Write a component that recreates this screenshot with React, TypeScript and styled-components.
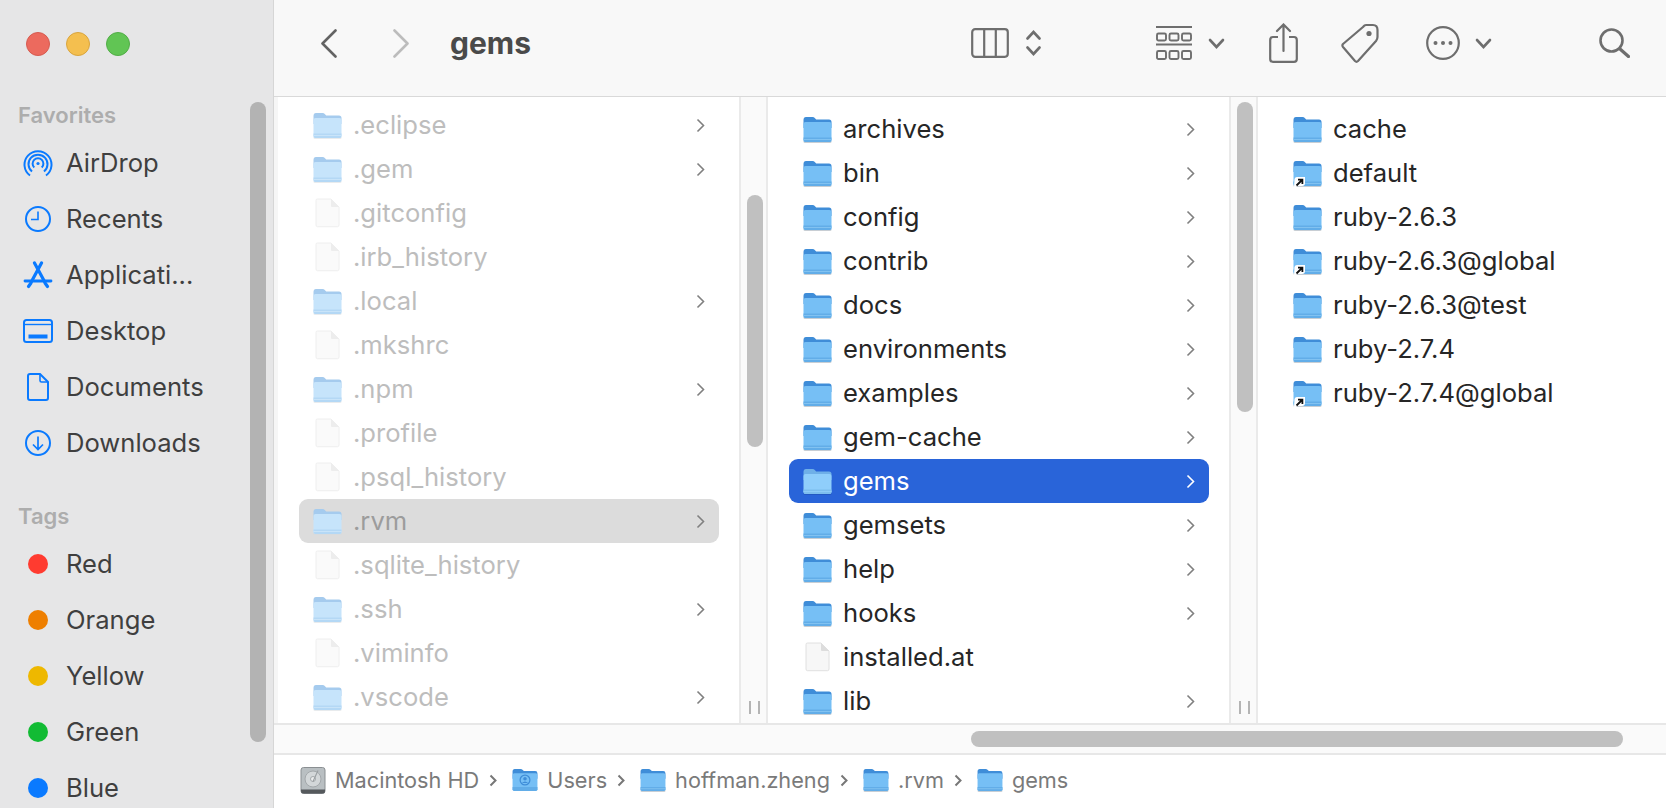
import styled, { createGlobalStyle } from "styled-components";

const GlobalStyle = createGlobalStyle`
  html, body {
    margin: 0;
    height: 100%;
    overflow: hidden;
    background: #fff;
    font-family: Inter, "Liberation Sans", sans-serif;
  }
`;

const Window = styled.div`
  display: flex;
  width: 1666px;
  height: 808px;
  overflow: hidden;
`;

/* sidebar */

const Sidebar = styled.aside`
  position: relative;
  flex: 0 0 273px;
  background: #e6e6e7;
  border-right: 1px solid #d6d6d6;
`;

const TrafficLights = styled.div`
  display: flex;
  align-items: center;
  gap: 16px;
  height: 88px;
  padding-left: 26px;
`;

const Light = styled.span<{ $color: string; $edge: string }>`
  width: 24px;
  height: 24px;
  box-sizing: border-box;
  border-radius: 50%;
  background: ${(p) => p.$color};
  border: 1px solid ${(p) => p.$edge};
`;

const SideHeading = styled.div<{ $top: number }>`
  height: 30px;
  line-height: 29px;
  margin: ${(p) => p.$top}px 0 4px 18px;
  font-size: 22px;
  font-weight: 600;
  color: #adadad;
`;

const NavRow = styled.div`
  display: flex;
  align-items: center;
  height: 56px;
  padding-left: 14px;
  font-size: 25.6px;
  color: #3f3f3f;
`;

const NavIcon = styled.span`
  display: flex;
  align-items: center;
  justify-content: center;
  flex: 0 0 48px;
  margin-right: 4px;
`;

const NavLabel = styled.span`
  padding-bottom: 2px;
`;

const TagDot = styled.span<{ $color: string }>`
  width: 20px;
  height: 20px;
  border-radius: 50%;
  background: ${(p) => p.$color};
`;

const SideThumb = styled.div`
  position: absolute;
  left: 250px;
  top: 102px;
  width: 16px;
  height: 640px;
  border-radius: 8px;
  background: #b3b3b3;
`;

/* main area */

const Main = styled.main`
  display: flex;
  flex: 1;
  flex-direction: column;
  min-width: 0;
`;

const Toolbar = styled.header`
  display: flex;
  align-items: center;
  box-sizing: border-box;
  flex: 0 0 97px;
  padding: 0 36px 10px 47px;
  background: #f8f8f8;
  border-bottom: 1px solid #d9d9d9;
`;

const Title = styled.h1`
  margin: 0 0 0 41px;
  font-size: 30px;
  font-weight: 700;
  color: #4a4a4a;
`;

const ToolSlot = styled.span<{ $left: number }>`
  display: flex;
  align-items: center;
  margin-left: ${(p) => p.$left}px;
`;

const Spacer = styled.span`
  flex: 1;
`;

const Browser = styled.div`
  display: flex;
  flex: 0 0 626px;
  box-sizing: border-box;
  border-bottom: 2px solid #e7e7e7;
`;

const Column = styled.section<{ $width?: number; $inset?: number }>`
  display: flex;
  box-sizing: border-box;
  flex: ${(p) => (p.$width ? `0 0 ${p.$width}px` : "1")};
  min-width: 0;
  padding-left: ${(p) => p.$inset ?? 0}px;
  background: #f6f6f6;
`;

const FileList = styled.ul<{ $top: number }>`
  flex: 1;
  min-width: 0;
  margin: 0;
  padding: ${(p) => p.$top}px 0 0;
  list-style: none;
  overflow: hidden;
  background: #fff;
`;

const rowText: Record<RowState, string> = {
  normal: "#262626",
  faded: "#bdbdbd",
  selected: "#ffffff",
  inactive: "#9c9c9c",
};

const FileRow = styled.li<{ $state: RowState }>`
  display: flex;
  align-items: center;
  height: 44px;
  margin: 0 20px 0 21px;
  padding: 0 14px;
  border-radius: 9px;
  font-size: 25.6px;
  color: ${(p) => rowText[p.$state]};
  background: ${(p) =>
    p.$state === "selected" ? "#2964d9" : p.$state === "inactive" ? "#dcdcdc" : "transparent"};
`;

const IconBox = styled.span`
  position: relative;
  display: flex;
  flex: 0 0 29px;
  margin-right: 11px;
`;

const FadedFile = styled.span`
  display: flex;
  opacity: 0.5;
`;

const AliasBadge = styled.svg`
  position: absolute;
  left: 0;
  bottom: -1px;
`;

const RowName = styled.span`
  flex: 1;
  padding-bottom: 2px;
  white-space: nowrap;
`;

const Gutter = styled.div`
  display: flex;
  flex: 0 0 29px;
  flex-direction: column;
  box-sizing: border-box;
  background: #fafafa;
  border-left: 2px solid #eaeaea;
  border-right: 2px solid #eaeaea;
`;

const ScrollThumb = styled.div<{ $top: number; $height: number }>`
  flex: 0 0 ${(p) => p.$height}px;
  width: 16px;
  margin: ${(p) => p.$top}px 0 0 6px;
  border-radius: 8px;
  background: #c0c0c0;
`;

const ResizeGrip = styled.div`
  display: flex;
  gap: 7px;
  height: 13px;
  margin: auto 0 9px 8px;
`;

const GripLine = styled.span`
  width: 2px;
  background: #b4b4b4;
`;

const HScrollTrack = styled.div`
  display: flex;
  align-items: center;
  box-sizing: border-box;
  flex: 0 0 30px;
  background: #fafafa;
  border-bottom: 2px solid #e7e7e7;
`;

const HScrollThumb = styled.div`
  width: 652px;
  height: 16px;
  margin-left: 697px;
  border-radius: 8px;
  background: #c0c0c0;
`;

const PathBar = styled.footer`
  display: flex;
  flex: 1;
  align-items: center;
  padding: 0 0 3px 26px;
  background: #fff;
  font-size: 21.7px;
  color: #7a7a7a;
`;

const Crumb = styled.span`
  display: flex;
  align-items: center;
`;

const CrumbIcon = styled.span`
  display: flex;
  margin-right: 9px;
`;

const CrumbArrow = styled.svg`
  margin: 0 15px 0 10px;
`;

/* drawings */

type RowState = "normal" | "faded" | "selected" | "inactive";
type FolderTone = "normal" | "faded" | "selected";

const folderTones: Record<FolderTone, { tab: string; body: string; band: string; line: string; shade: string }> = {
  normal: { tab: "#3f8dd8", body: "#76bff5", band: "#62ade8", line: "#8ac7f3", shade: "#9aa6b0" },
  faded: { tab: "#a5cbee", body: "#c6e4fb", band: "#b4d8f5", line: "#cfe8fb", shade: "#d5dadf" },
  selected: { tab: "#6fb0e8", body: "#8fcefb", band: "#7dbdee", line: "#93cff9", shade: "#1f4fae" },
};

const Folder = ({ tone = "normal", w = 29, h = 27 }: { tone?: FolderTone; w?: number; h?: number }) => {
  const c = folderTones[tone];
  return (
    <svg width={w} height={h} viewBox="0 0 29 27">
      <rect x="0.5" y="24" width="28" height="3" rx="1.5" fill={c.shade} opacity="0.55" />
      <path d="M0.5 4Q0.5 1 3 1H9.5Q11 1 12 2.2L13.2 3.5H26Q28.5 3.5 28.5 6V12H0.5Z" fill={c.tab} />
      <path d="M0.5 8Q0.5 6 2.5 6H26.5Q28.5 6 28.5 8V24Q28.5 26 26.5 26H2.5Q0.5 26 0.5 24Z" fill={c.body} />
      <path d="M0.5 21.5H28.5V24Q28.5 26 26.5 26H2.5Q0.5 26 0.5 24Z" fill={c.band} />
      <rect x="0.5" y="23" width="28" height="0.8" fill={c.line} />
    </svg>
  );
};

const DocFile = () => (
  <svg width="29" height="30" viewBox="0 0 29 30">
    <path
      d="M3 2.5Q3 1 4.5 1H18L26 9V27Q26 28.7 24.5 28.7H4.5Q3 28.7 3 27Z"
      fill="#f7f7f7"
      stroke="#e0e0e0"
    />
    <path d="M18 1V8Q18 9 19 9H26Z" fill="#dddddd" />
  </svg>
);

const Alias = () => (
  <AliasBadge width="13" height="12" viewBox="0 0 13 12">
    <path d="M1 11.5 L1.5 3 Q2 1 4 1 H12 V7 Q12 10 9 10 H4 L2 12Z" fill="#fff" />
    <path d="M3.5 9.5 L9 4M5 3.6H9.4V8" fill="none" stroke="#111" strokeWidth="1.8" />
  </AliasBadge>
);

const Chevron = ({ color }: { color: string }) => (
  <svg width="9" height="15" viewBox="0 0 9 15">
    <path d="M1.5 1.5L7.5 7.5L1.5 13.5" fill="none" stroke={color} strokeWidth="1.6" />
  </svg>
);

const AirDropIcon = () => (
  <svg width="30" height="28" viewBox="0 0 30 28" fill="none" stroke="#0a7aff" strokeWidth="2">
    <path d="M7 26.5A13.5 13.5 0 1 1 23 26.5" />
    <path d="M9 22.5A9.5 9.5 0 1 1 21 22.5" />
    <path d="M11.3 18.6A5.4 5.4 0 1 1 18.7 18.6" />
    <circle cx="15" cy="14.5" r="1.6" fill="#0a7aff" stroke="none" />
  </svg>
);

const RecentsIcon = () => (
  <svg width="28" height="28" viewBox="0 0 28 28" fill="none" stroke="#0a7aff" strokeWidth="2">
    <circle cx="14" cy="14" r="12" />
    <path d="M14 6.5V14.5H7" strokeWidth="1.6" />
  </svg>
);

const AppsIcon = () => (
  <svg width="30" height="28" viewBox="0 0 30 28" fill="none" stroke="#0a7aff" strokeLinecap="round">
    <path d="M11.5 2L21.5 20.5M18.5 2L8.5 20.5" strokeWidth="3.2" />
    <path d="M2 20H28" strokeWidth="2.8" />
    <path d="M5.5 25.5L8 22M24.5 25.5L22 22" strokeWidth="3.2" />
  </svg>
);

const DesktopIcon = () => (
  <svg width="30" height="24" viewBox="0 0 30 24" fill="none" stroke="#0a7aff" strokeWidth="2">
    <rect x="1" y="1" width="28" height="22" rx="2.5" />
    <path d="M1 5.5H29" strokeWidth="1.4" />
    <rect x="5.5" y="15.5" width="19" height="4" fill="#0a7aff" stroke="none" />
  </svg>
);

const DocumentsIcon = () => (
  <svg width="22" height="28" viewBox="0 0 22 28" fill="none" stroke="#0a7aff" strokeWidth="2">
    <path d="M1 3Q1 1 3 1H13L21 9V25Q21 27 19 27H3Q1 27 1 25Z" />
    <path d="M13 1V7.5Q13 9 14.5 9H21" strokeWidth="1.6" />
  </svg>
);

const DownloadsIcon = () => (
  <svg width="28" height="28" viewBox="0 0 28 28" fill="none" stroke="#0a7aff" strokeWidth="2">
    <circle cx="14" cy="14" r="12" />
    <path d="M14 7.5V20M9 15.5L14 20.5L19 15.5" strokeWidth="1.7" />
  </svg>
);

const DiskIcon = () => (
  <svg width="26" height="27" viewBox="0 0 26 27">
    <rect x="1" y="0.5" width="24" height="26" rx="2.5" fill="#b9bfc2" stroke="#8a8f92" />
    <path d="M1 22.5H25V24Q25 26.5 22.5 26.5H3.5Q1 26.5 1 24Z" fill="#55595c" />
    <circle cx="13" cy="12" r="8" fill="#d3d7d9" stroke="#a3a8ab" />
    <circle cx="13" cy="12" r="2.5" fill="#eceeee" stroke="#a3a8ab" />
    <path d="M13 14.5L18 3.5" stroke="#9a9fa2" strokeWidth="1.1" />
  </svg>
);

const UserFolder = () => (
  <svg width="26" height="24" viewBox="0 0 29 27">
    <path d="M0.5 4Q0.5 1 3 1H9.5Q11 1 12 2.2L13.2 3.5H26Q28.5 3.5 28.5 6V12H0.5Z" fill="#3f8dd8" />
    <path d="M0.5 8Q0.5 6 2.5 6H26.5Q28.5 6 28.5 8V24Q28.5 26 26.5 26H2.5Q0.5 26 0.5 24Z" fill="#76bff5" />
    <path d="M0.5 21.5H28.5V24Q28.5 26 26.5 26H2.5Q0.5 26 0.5 24Z" fill="#62ade8" />
    <circle cx="14.5" cy="13.5" r="5.5" fill="none" stroke="#3f8dd8" strokeWidth="1.4" />
    <circle cx="14.5" cy="12" r="2" fill="#3f8dd8" />
    <path d="M11 17Q14.5 13.5 18 17Z" fill="#3f8dd8" />
  </svg>
);

const toolStroke = { fill: "none", stroke: "#6e6e6e", strokeWidth: 2.2 };

const SmallDown = () => (
  <svg width="17" height="11" viewBox="0 0 17 11" {...toolStroke} strokeWidth={2.6} strokeLinecap="round">
    <path d="M2 2L8.5 9L15 2" />
  </svg>
);

/* data */

const favorites = [
  { name: "AirDrop", icon: <AirDropIcon /> },
  { name: "Recents", icon: <RecentsIcon /> },
  { name: "Applicati...", icon: <AppsIcon /> },
  { name: "Desktop", icon: <DesktopIcon /> },
  { name: "Documents", icon: <DocumentsIcon /> },
  { name: "Downloads", icon: <DownloadsIcon /> },
];

const tags = [
  { name: "Red", color: "#ff3b30" },
  { name: "Orange", color: "#ee7f00" },
  { name: "Yellow", color: "#eeb800" },
  { name: "Green", color: "#12bb34" },
  { name: "Blue", color: "#0a7aff" },
];

type Entry = { name: string; kind: "folder" | "file" | "alias" };

const folder = (name: string): Entry => ({ name, kind: "folder" });
const file = (name: string): Entry => ({ name, kind: "file" });
const alias = (name: string): Entry => ({ name, kind: "alias" });

const homeEntries = [
  folder(".eclipse"),
  folder(".gem"),
  file(".gitconfig"),
  file(".irb_history"),
  folder(".local"),
  file(".mkshrc"),
  folder(".npm"),
  file(".profile"),
  file(".psql_history"),
  folder(".rvm"),
  file(".sqlite_history"),
  folder(".ssh"),
  file(".viminfo"),
  folder(".vscode"),
];

const rvmEntries = [
  folder("archives"),
  folder("bin"),
  folder("config"),
  folder("contrib"),
  folder("docs"),
  folder("environments"),
  folder("examples"),
  folder("gem-cache"),
  folder("gems"),
  folder("gemsets"),
  folder("help"),
  folder("hooks"),
  file("installed.at"),
  folder("lib"),
];

const gemEntries = [
  folder("cache"),
  alias("default"),
  folder("ruby-2.6.3"),
  alias("ruby-2.6.3@global"),
  folder("ruby-2.6.3@test"),
  folder("ruby-2.7.4"),
  alias("ruby-2.7.4@global"),
];

const crumbs = [
  { name: "Macintosh HD", icon: <DiskIcon /> },
  { name: "Users", icon: <UserFolder /> },
  { name: "hoffman.zheng", icon: <Folder w={26} h={24} /> },
  { name: ".rvm", icon: <Folder w={26} h={24} /> },
  { name: "gems", icon: <Folder w={26} h={24} /> },
];

const Entries = ({
  entries,
  top,
  faded,
  current,
}: {
  entries: Entry[];
  top: number;
  faded?: boolean;
  current?: string;
}) => (
  <FileList $top={top}>
    {entries.map((entry) => {
      const isCurrent = entry.name === current;
      const state: RowState = isCurrent ? (faded ? "inactive" : "selected") : faded ? "faded" : "normal";
      const tone: FolderTone = faded ? "faded" : isCurrent ? "selected" : "normal";
      return (
        <FileRow key={entry.name} $state={state}>
          <IconBox>
            {entry.kind !== "file" && <Folder tone={tone} />}
            {entry.kind === "file" && (faded ? <FadedFile><DocFile /></FadedFile> : <DocFile />)}
            {entry.kind === "alias" && <Alias />}
          </IconBox>
          <RowName>{entry.name}</RowName>
          {entry.kind !== "file" && entries !== gemEntries && (
            <Chevron color={state === "selected" ? "#ffffff" : "#808080"} />
          )}
        </FileRow>
      );
    })}
  </FileList>
);

export default function App() {
  return (
    <Window>
      <GlobalStyle />
      <Sidebar>
        <TrafficLights>
          <Light $color="#ec6a5e" $edge="#d65b50" />
          <Light $color="#f4bf4f" $edge="#d9a53e" />
          <Light $color="#61c554" $edge="#52ad47" />
        </TrafficLights>
        <SideHeading $top={13}>Favorites</SideHeading>
        {favorites.map((item) => (
          <NavRow key={item.name}>
            <NavIcon>{item.icon}</NavIcon>
            <NavLabel>{item.name}</NavLabel>
          </NavRow>
        ))}
        <SideHeading $top={31}>Tags</SideHeading>
        {tags.map((tag) => (
          <NavRow key={tag.name}>
            <NavIcon>
              <TagDot $color={tag.color} />
            </NavIcon>
            <NavLabel>{tag.name}</NavLabel>
          </NavRow>
        ))}
        <SideThumb />
      </Sidebar>

      <Main>
        <Toolbar>
          <svg width="16" height="29" viewBox="0 0 16 29" {...toolStroke} strokeWidth={2.6} strokeLinecap="round" strokeLinejoin="round">
            <path d="M14.5 1.5L1.5 14.5L14.5 27.5" stroke="#636363" />
          </svg>
          <ToolSlot $left={56}>
            <svg width="16" height="29" viewBox="0 0 16 29" {...toolStroke} strokeWidth={2.6} strokeLinecap="round" strokeLinejoin="round">
              <path d="M1.5 1.5L14.5 14.5L1.5 27.5" stroke="#bcbcbc" />
            </svg>
          </ToolSlot>
          <Title>gems</Title>
          <Spacer />

          <ToolSlot $left={0}>
            <svg width="38" height="30" viewBox="0 0 38 30" {...toolStroke}>
              <rect x="1.2" y="1.2" width="35.6" height="27.6" rx="3" />
              <path d="M13.2 1.2V28.8M24.8 1.2V28.8" />
            </svg>
          </ToolSlot>
          <ToolSlot $left={17}>
            <svg width="15" height="28" viewBox="0 0 15 28" {...toolStroke} strokeWidth={2.6} strokeLinecap="round">
              <path d="M1.5 9.5L7.5 3L13.5 9.5M1.5 18.5L7.5 25L13.5 18.5" />
            </svg>
          </ToolSlot>
          <ToolSlot $left={115}>
            <svg width="36" height="35" viewBox="0 0 36 35" {...toolStroke} strokeWidth={1.9}>
              <path d="M0 1H36M0 18.5H36" strokeWidth="2.2" />
              <rect x="1" y="7.5" width="9" height="7" rx="1.5" />
              <rect x="13.5" y="7.5" width="9" height="7" rx="1.5" />
              <rect x="26" y="7.5" width="9" height="7" rx="1.5" />
              <rect x="1" y="25" width="9" height="8" rx="1.5" />
              <rect x="13.5" y="25" width="9" height="8" rx="1.5" />
              <rect x="26" y="25" width="9" height="8" rx="1.5" />
            </svg>
          </ToolSlot>
          <ToolSlot $left={16}>
            <SmallDown />
          </ToolSlot>
          <ToolSlot $left={44}>
            <svg width="29" height="40" viewBox="0 0 29 40" {...toolStroke}>
              <path d="M9 14H4Q1.2 14 1.2 17V36Q1.2 38.8 4 38.8H25Q27.8 38.8 27.8 36V17Q27.8 14 25 14H20" />
              <path d="M14.5 28V2M8 8L14.5 1.5L21 8" strokeLinecap="round" />
            </svg>
          </ToolSlot>
          <ToolSlot $left={43}>
            <svg width="38" height="40" viewBox="0 0 38 40" {...toolStroke} strokeLinejoin="round">
              <path d="M25 2H32Q36.5 2 36.5 7V14Q36.5 16 35 18L17 38Q15.5 39.5 14 38L2 24Q0.8 22.5 2 21L22 4Q23.5 2 25 2Z" />
              <circle cx="28" cy="10.5" r="2.6" fill="#6e6e6e" stroke="none" />
            </svg>
          </ToolSlot>
          <ToolSlot $left={47}>
            <svg width="34" height="34" viewBox="0 0 34 34" {...toolStroke}>
              <circle cx="17" cy="17" r="15.8" />
              <circle cx="9.5" cy="17" r="2" fill="#6e6e6e" stroke="none" />
              <circle cx="17" cy="17" r="2" fill="#6e6e6e" stroke="none" />
              <circle cx="24.5" cy="17" r="2" fill="#6e6e6e" stroke="none" />
            </svg>
          </ToolSlot>
          <ToolSlot $left={15}>
            <SmallDown />
          </ToolSlot>
          <ToolSlot $left={107}>
            <svg width="31" height="30" viewBox="0 0 31 30" {...toolStroke} strokeWidth={2.6} strokeLinecap="round">
              <circle cx="12.5" cy="12.5" r="11" />
              <path d="M21 21L29.5 28.5" strokeWidth="3.2" />
            </svg>
          </ToolSlot>
        </Toolbar>

        <Browser>
          <Column $width={494} $inset={4}>
            <Entries entries={homeEntries} top={6} faded current=".rvm" />
            <Gutter>
              <ScrollThumb $top={98} $height={252} />
              <ResizeGrip>
                <GripLine />
                <GripLine />
              </ResizeGrip>
            </Gutter>
          </Column>
          <Column $width={490}>
            <Entries entries={rvmEntries} top={10} current="gems" />
            <Gutter>
              <ScrollThumb $top={5} $height={310} />
              <ResizeGrip>
                <GripLine />
                <GripLine />
              </ResizeGrip>
            </Gutter>
          </Column>
          <Column>
            <Entries entries={gemEntries} top={10} />
          </Column>
        </Browser>

        <HScrollTrack>
          <HScrollThumb />
        </HScrollTrack>

        <PathBar>
          {crumbs.map((crumb, index) => (
            <Crumb key={crumb.name}>
              <CrumbIcon>{crumb.icon}</CrumbIcon>
              {crumb.name}
              {index < crumbs.length - 1 && (
                <CrumbArrow width="8" height="13" viewBox="0 0 8 13">
                  <path d="M1.5 1.5L6.5 6.5L1.5 11.5" fill="none" stroke="#777" strokeWidth="2" />
                </CrumbArrow>
              )}
            </Crumb>
          ))}
        </PathBar>
      </Main>
    </Window>
  );
}
